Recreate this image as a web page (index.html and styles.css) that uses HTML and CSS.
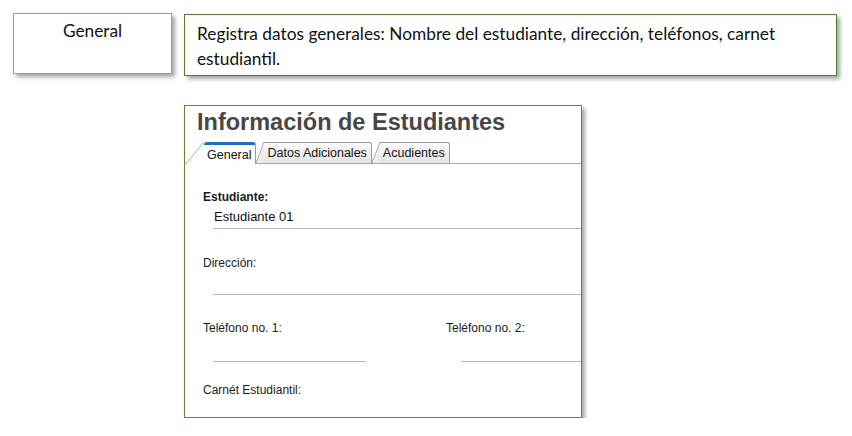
FILE: index.html
```html
<!DOCTYPE html>
<html lang="es">
<head>
<meta charset="utf-8">
<link rel="stylesheet" href="styles.css">
</head>
<body>
<div class="page">
  <div class="top-row">
    <div class="name-box">General</div>
    <div class="desc-box">Registra datos generales: Nombre del estudiante, dirección, teléfonos, carnet estudiantil.</div>
  </div>
  <div class="shot">
    <h1 class="shot-title">Información de Estudiantes</h1>
    <div class="tabs">
      <div class="tab active">General</div>
      <div class="tab">Datos Adicionales</div>
      <div class="tab">Acudientes</div>
    </div>
    <div class="form">
      <div class="label bold">Estudiante:</div>
      <div class="input first">Estudiante 01</div>
      <div class="label l-dir">Dirección:</div>
      <div class="input"></div>
      <div class="phones">
        <div class="phone">
          <div class="label">Teléfono no. 1:</div>
          <div class="input short"></div>
        </div>
        <div class="phone two">
          <div class="label">Teléfono no. 2:</div>
          <div class="input"></div>
        </div>
      </div>
      <div class="label l-carnet">Carnét Estudiantil:</div>
    </div>
  </div>
</div>
</body>
</html>
```

FILE: styles.css
```css
html, body {
  margin: 0;
  padding: 0;
  background: #ffffff;
}

.page {
  padding: 13px 0 0 13px;
}

.top-row {
  display: flex;
  align-items: flex-start;
  gap: 12px;
}

.name-box {
  box-sizing: border-box;
  width: 159px;
  height: 61px;
  border: 1px solid #93a882;
  box-shadow: 3px 3px 4px rgba(0, 0, 0, 0.35);
  font-family: Lato, "Open Sans", sans-serif;
  font-size: 17.3px;
  color: #111;
  text-align: center;
  line-height: 25px;
  padding-top: 4px;
}

.desc-box {
  box-sizing: border-box;
  width: 653px;
  height: 62px;
  margin-top: 1px;
  border: 1px solid #4f7f2f;
  box-shadow: 3px 3px 4px rgba(0, 0, 0, 0.35);
  font-family: Lato, "Open Sans", sans-serif;
  font-size: 17.3px;
  color: #111;
  line-height: 25px;
  padding: 6px 40px 0 12px;
}

.shot {
  box-sizing: border-box;
  width: 398px;
  height: 313px;
  margin: 29px 0 0 171px;
  border: 1px solid #5b8a3c;
  box-shadow: 3px 3px 4px rgba(0, 0, 0, 0.35);
  overflow: hidden;
  font-family: "Liberation Sans", Arial, sans-serif;
  color: #1a1a1a;
}

.shot-title {
  margin: 0;
  padding: 2px 0 0 12px;
  font-size: 23.5px;
  line-height: 28px;
  font-weight: bold;
  color: #474747;
}

.tabs {
  display: flex;
  align-items: flex-end;
  gap: 8px;
  height: 21px;
  margin: 6px 0 0 0;
  padding-left: 19px;
  border-bottom: 1px solid #a9a9a9;
}

.tab {
  position: relative;
  box-sizing: border-box;
  height: 21px;
  padding: 3px 4px 0 3px;
  font-size: 12.5px;
  line-height: 15px;
  color: #111;
  background: linear-gradient(#fbfbfb, #e3e3e3);
  border-top: 1px solid #9a9a9a;
  border-right: 1px solid #9a9a9a;
  border-radius: 0 3px 0 0;
}

.tab::before {
  content: "";
  position: absolute;
  left: -8px;
  top: -1px;
  width: 8px;
  height: 21px;
  background: linear-gradient(to bottom right, transparent calc(50% - 0.7px), #9a9a9a 50%, #f0f0f0 calc(50% + 0.7px), #e6e6e6);
}

.tab.active {
  height: 22px;
  padding: 3px 4px 0 3px;
  margin-bottom: -1px;
  background: #ffffff;
  border-top: 3px solid #1d6ec6;
  border-radius: 3px 3px 0 0;
}

.tab.active::before {
  left: -18px;
  top: -3px;
  width: 18px;
  height: 22px;
  background: linear-gradient(to bottom right, transparent calc(50% - 0.7px), #a6a6a6 50%, #ffffff calc(50% + 0.7px));
}

.form {
  padding: 26px 0 0 18px;
}

.label {
  font-size: 12px;
  line-height: 14px;
  height: 14px;
  color: #1a1a1a;
}

.bold {
  font-weight: bold;
}

.input {
  margin: 2px 0 0 10px;
  height: 22px;
  border-bottom: 1px solid #b2b6be;
  font-size: 13px;
  line-height: 22px;
  color: #111;
}

.input.first {
  padding-left: 1px;
}

.l-dir {
  margin-top: 27px;
}

.phones {
  display: grid;
  grid-template-columns: 243px 1fr;
  margin-top: 26px;
}

.phones .input {
  margin-top: 4px;
}

.input.short {
  width: 153px;
}

.phone.two .input {
  margin-left: 15px;
}

.l-carnet {
  margin-top: 21px;
}
```
